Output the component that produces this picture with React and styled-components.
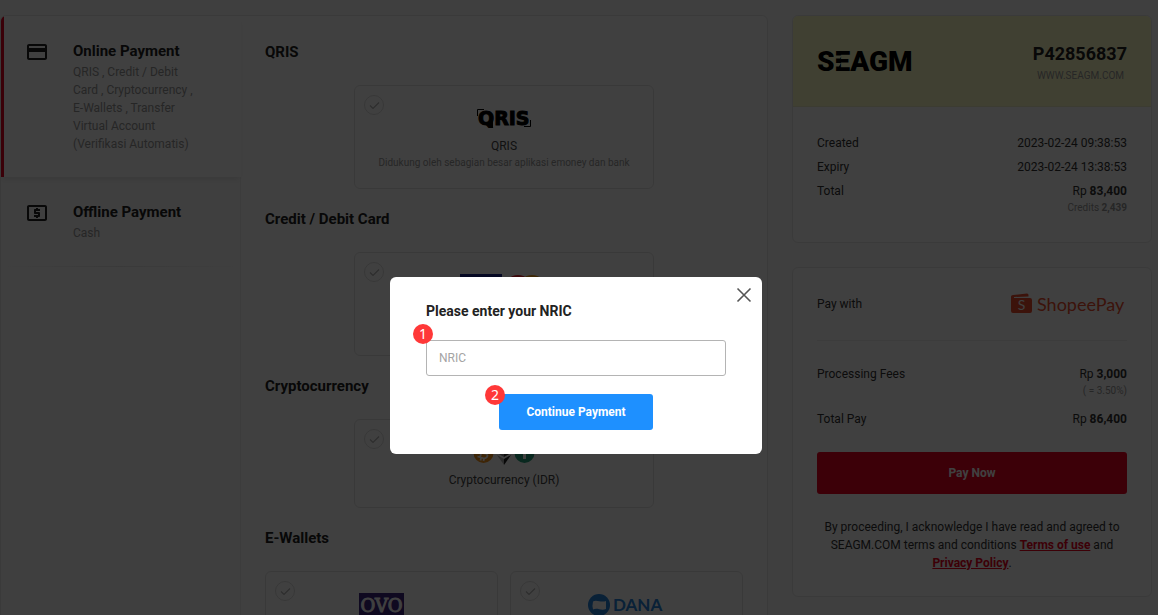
import React from "react";
import styled, { createGlobalStyle, css } from "styled-components";
import { MdPayment, MdLocalAtm } from "react-icons/md";

const GlobalStyle = createGlobalStyle`
  *, *::before, *::after { box-sizing: border-box; }
  body {
    margin: 0;
    height: 100vh;
    overflow: hidden;
    background: #fafafa;
    color: #333;
    font: 400 12px/18px Roboto, "Liberation Sans", sans-serif;
  }
  h1, h2, p, dl, dd, dt { margin: 0; font: inherit; }
  button, input { font: inherit; }
  svg { overflow: visible; }
`;

const Page = styled.div`
  display: grid;
  grid-template-columns: minmax(0, 1fr) 360px;
  gap: 24px;
  align-items: start;
  padding: 15px 6px 0 0;
`;

const panel = css`
  background: #fff;
  border: 1px solid #e8e8e8;
  border-radius: 6px;
`;

/* Payment methods */

const Methods = styled.main`
  ${panel}
  display: grid;
  grid-template-columns: 240px minmax(0, 1fr);
  overflow: hidden;
`;

const Nav = styled.nav`
  display: flex;
  flex-direction: column;
  background: #fafafa;
  border-right: 1px solid #f0f0f0;
`;

const NavItem = styled.button`
  position: relative;
  display: flex;
  align-items: flex-start;
  gap: 24px;
  margin-right: ${(p) => (p.$active ? "-1px" : "0")};
  padding: 24px 44px 24px 24px;
  border: 0;
  background: ${(p) => (p.$active ? "#fff" : "transparent")};
  box-shadow: ${(p) => (p.$active ? "inset 3px 0 0 #e50020, 0 4px 6px -2px rgba(0, 0, 0, 0.1)" : "none")};
  color: #222;
  text-align: left;

  svg { flex: none; }
`;

const NavTitle = styled.span`
  display: block;
  font-size: 15px;
  font-weight: 700;
  line-height: 23px;
  white-space: nowrap;
`;

const NavText = styled.span`
  display: block;
  color: #999;
  font-weight: 400;
`;

const NavDivider = styled.hr`
  width: 100%;
  height: 1px;
  margin: 0;
  border: 0;
  background: linear-gradient(to right, transparent, #e4e4e4 50%, transparent);
`;

const Content = styled.div`
  display: flex;
  flex-direction: column;
  gap: 18px;
  padding: 24px;
`;

const SectionTitle = styled.h2`
  margin-bottom: 21px;
  color: #222;
  font-size: 15px;
  font-weight: 700;
  line-height: 24px;
`;

const Options = styled.div`
  display: grid;
  grid-template-columns: ${(p) => (p.$pair ? "1fr 1fr" : "minmax(0, 300px)")};
  justify-content: center;
  gap: 12px;
`;

const Option = styled.label`
  position: relative;
  display: flex;
  flex-direction: column;
  align-items: center;
  min-height: ${(p) => (p.$tall ? "104px" : "89px")};
  padding: 21px 18px 18px;
  border: 1px solid #e4e4e4;
  border-radius: 6px;
  text-align: center;
`;

const Mark = styled.span`
  position: absolute;
  top: 9px;
  left: 9px;
  display: grid;
  width: 20px;
  height: 20px;

  > * { grid-area: 1 / 1; }
`;

const Radio = styled.input`
  appearance: none;
  width: 20px;
  height: 20px;
  margin: 0;
  border: 1px solid #ddd;
  border-radius: 50%;
`;

const LogoBox = styled.span`
  display: flex;
  align-items: flex-start;
  justify-content: center;
  height: 24px;
  margin-bottom: 6px;
`;

const OptionText = styled.span`
  color: #444;
`;

const Small = styled.span`
  color: #999;
  font-size: 10px;
  line-height: 15px;
`;

/* Order column */

const Side = styled.aside`
  display: flex;
  flex-direction: column;
  gap: 24px;
`;

const Card = styled.section`
  ${panel}
  overflow: hidden;
`;

const OrderHead = styled.header`
  display: flex;
  align-items: center;
  justify-content: space-between;
  height: 91px;
  padding: 0 24px;
  background: #ffffc8;
  border-bottom: 1px solid #f0f0c8;
`;

const OrderNumber = styled.div`
  display: flex;
  flex-direction: column;
  align-items: flex-end;
`;

const OrderId = styled.h1`
  color: #222;
  font-size: 18px;
  font-weight: 700;
  line-height: 28px;
`;

const Site = styled(Small)`
  padding-right: 3px;
`;

const OrderBody = styled.dl`
  display: flex;
  flex-direction: column;
  gap: 6px;
  padding: 27px 24px;
`;

const PayBody = styled.div`
  display: flex;
  flex-direction: column;
  padding: 18px 24px 24px;
`;

const PayWith = styled.div`
  display: flex;
  align-items: center;
  justify-content: space-between;
  height: 55px;
  padding-bottom: 18px;
  border-bottom: 1px solid #eee;
`;

const Totals = styled.dl`
  display: flex;
  flex-direction: column;
  gap: 12px;
  padding: 24px 0;
`;

const RowLine = styled.div`
  display: flex;
  justify-content: space-between;
`;

const Value = styled.dd`
  display: flex;
  flex-direction: column;
  align-items: flex-end;

  b { font-weight: 700; }
`;

const Button = styled.button`
  display: block;
  width: ${(p) => (p.$wide ? "100%" : "154px")};
  height: ${(p) => (p.$wide ? "42px" : "36px")};
  padding: 0;
  border: 0;
  border-radius: 3px;
  background: ${(p) => (p.$wide ? "#ee0020" : "#1e90ff")};
  color: #fff;
  font-weight: 700;
`;

const Terms = styled.p`
  margin-top: 24px;
  text-align: center;

  a { color: #f0001c; font-weight: 700; }
`;

/* Dialog */

const Overlay = styled.div`
  position: fixed;
  inset: 0;
  display: flex;
  align-items: flex-start;
  justify-content: center;
  padding: 277px 6px 0 0;
  background: rgba(0, 0, 0, 0.75);
`;

const Dialog = styled.form`
  position: relative;
  display: flex;
  flex-direction: column;
  align-items: center;
  width: 372px;
  padding: 24px 36px;
  border-radius: 6px;
  background: #fff;
`;

const DialogTitle = styled.label`
  align-self: stretch;
  margin-bottom: 19px;
  color: #222;
  font-size: 14px;
  font-weight: 700;
  line-height: 20px;
`;

const Close = styled.button`
  position: absolute;
  top: 8px;
  right: 8px;
  display: grid;
  place-items: center;
  width: 20px;
  height: 20px;
  padding: 0;
  border: 0;
  background: none;
`;

const Field = styled.div`
  position: relative;
  width: ${(p) => (p.$wide ? "100%" : "auto")};
`;

const Input = styled.input`
  display: block;
  width: 100%;
  height: 36px;
  margin-bottom: 18px;
  padding: 0 12px;
  border: 1px solid #b4b4b4;
  border-radius: 3px;
  background: #fff;

  &::placeholder { color: #a4a4a4; opacity: 1; }
`;

const Step = styled.span`
  position: absolute;
  top: ${(p) => p.$top}px;
  left: ${(p) => p.$left}px;
  width: 20px;
  height: 20px;
  border-radius: 50%;
  background: #ff3838;
  color: #fff;
  font: 400 14px/20px "Noto Sans", sans-serif;
  text-align: center;
`;

/* Logos */

const QrisLogo = () => (
  <svg width="54" height="20" viewBox="0 0 54 20" role="img" aria-label="QRIS">
    <path d="M.5 9V2.500H7M53.500 13v6.500H47" fill="none" stroke="#000" />
    <path d="M12 13h4v8h-4z" />
    <text x="1" y="18" fontFamily="DejaVu Sans" fontWeight="700" fontSize="19" stroke="#000" strokeWidth="1">QRIS</text>
  </svg>
);

const CardLogos = () => (
  <svg width="90" height="28" viewBox="0 0 90 28" role="img" aria-label="Visa, Mastercard">
    <path d="M1 0h42v28H1z" fill="#14208c" />
    <circle cx="59" cy="15" r="14" fill="#eb1c26" />
    <circle cx="73" cy="15" r="14" fill="#f79e1b" />
  </svg>
);

const CryptoLogos = () => (
  <svg width="62" height="24" viewBox="0 0 62 24" role="img" aria-label="Bitcoin, Ethereum, Tether">
    <circle cx="10.500" cy="12" r="10" fill="#f7931a" />
    <path d="M7 7l7 1.500q3 1 1.500 3-1 1.500-3 1 3 1.500 1.500 3.500-1.500 2-4.500 1l-5-1.500M9 8l-2 9M10 5l-1 3M13 6l-.5 2M8 17l-.5 2.500M11 17.500l-.5 2.500M8.500 11.800l4 .8" fill="none" stroke="#fff" strokeWidth="1.800" />
    <path d="M31 0l-7 12 7 4z" fill="#8a8a8a" />
    <path d="M31 0l7 12-7 4z" fill="#333" />
    <path d="M24 14l7 4v6z" fill="#aaa" />
    <path d="M38 14l-7 4v6z" fill="#222" />
    <circle cx="51.500" cy="12" r="10" fill="#26a17b" />
    <path d="M46 6h11v3h-4v9h-3V9h-4z" fill="#fff" />
  </svg>
);

const OvoLogo = () => (
  <svg width="45" height="28" viewBox="0 0 45 28" role="img" aria-label="OVO">
    <path d="M0 0h45v28H0z" fill="#3f2480" />
    <text x="22.500" y="19" textAnchor="middle" fontFamily="DejaVu Serif" fontSize="18" fill="#fff" stroke="#fff">OVO</text>
  </svg>
);

const DanaLogo = () => (
  <svg width="78" height="24" viewBox="0 0 78 24" role="img" aria-label="DANA">
    <circle cx="11" cy="12" r="11" fill="#2482dc" />
    <path d="M5 8.500c3.500-2.500 8 1.500 13-.5v8c-5 2-8.500-1.500-13 .5q-1-4 0-8z" fill="#fff" />
    <text x="25" y="18" fontFamily="Lato" fontWeight="700" fontSize="17" fill="#2482dc">DANA</text>
  </svg>
);

const SeagmLogo = () => (
  <svg width="98" height="24" viewBox="0 0 98 24" role="img" aria-label="SEAGM">
    <text x="0" y="22" fontFamily="Roboto" fontWeight="900" fontSize="28">SEAGM</text>
    <path d="M17 6.500h8l-2 3h-6zM17 14h7l-2 3.500h-5z" fill="#ffffc8" />
  </svg>
);

const ShopeePayLogo = () => (
  <svg width="117" height="24" viewBox="0 0 117 24" role="img" aria-label="ShopeePay">
    <path d="M1 4.500Q1 3 3 3l14-1.500q1.500 0 1.500 1.500v1.500L4 5v1h16q2 0 2 2v11q0 2-2 2H3q-2 0-2-2z" fill="#ee4d2d" />
    <text x="11.500" y="18" textAnchor="middle" fontFamily="Lato" fontSize="14" fill="#fff">S</text>
    <text x="27" y="19" fontFamily="Lato" fontSize="18" fill="#ee4d2d">ShopeePay</text>
  </svg>
);

const CheckGlyph = () => (
  <svg width="20" height="20" viewBox="0 0 20 20" fill="none" stroke="#b4b4b4" strokeWidth="1.200" aria-hidden="true">
    <path d="M6 10.500l3 3 6-6" />
  </svg>
);

const SECTIONS = [
  {
    title: "QRIS",
    options: [{ id: "qris", Logo: QrisLogo, name: "QRIS", note: "Didukung oleh sebagian besar aplikasi emoney dan bank", tall: true }],
  },
  { title: "Credit / Debit Card", options: [{ id: "card", Logo: CardLogos, tall: true }] },
  { title: "Cryptocurrency", options: [{ id: "crypto", Logo: CryptoLogos, name: "Cryptocurrency (IDR)" }] },
  {
    title: "E-Wallets",
    options: [
      { id: "ovo", Logo: OvoLogo },
      { id: "dana", Logo: DanaLogo },
    ],
  },
];

const Row = ({ label, children, note }) => (
  <RowLine>
    <dt>{label}</dt>
    <Value>
      <span>{children}</span>
      {note && <Small>{note}</Small>}
    </Value>
  </RowLine>
);

export default function App() {
  return (
    <>
      <GlobalStyle />
      <Page>
        <Methods>
          <Nav>
            <NavItem type="button" $active>
              <MdPayment size={24} />
              <span>
                <NavTitle>Online Payment</NavTitle>
                <NavText>QRIS , Credit / Debit Card , Cryptocurrency , E-Wallets , Transfer Virtual Account (Verifikasi Automatis)</NavText>
              </span>
            </NavItem>
            <NavItem type="button">
              <MdLocalAtm size={24} />
              <span>
                <NavTitle>Offline Payment</NavTitle>
                <NavText>Cash</NavText>
              </span>
            </NavItem>
            <NavDivider />
          </Nav>
          <Content>
            {SECTIONS.map(({ title, options }) => (
              <section key={title}>
                <SectionTitle>{title}</SectionTitle>
                <Options $pair={options.length > 1}>
                  {options.map(({ id, Logo, name, note, tall }) => (
                    <Option key={id} $tall={tall}>
                      <Mark>
                        <Radio type="radio" name="method" value={id} />
                        <CheckGlyph />
                      </Mark>
                      <LogoBox><Logo /></LogoBox>
                      {name && <OptionText>{name}</OptionText>}
                      {note && <Small>{note}</Small>}
                    </Option>
                  ))}
                </Options>
              </section>
            ))}
          </Content>
        </Methods>

        <Side>
          <Card>
            <OrderHead>
              <SeagmLogo />
              <OrderNumber>
                <OrderId>P42856837</OrderId>
                <Site>WWW.SEAGM.COM</Site>
              </OrderNumber>
            </OrderHead>
            <OrderBody>
              <Row label="Created">2023-02-24 09:38:53</Row>
              <Row label="Expiry">2023-02-24 13:38:53</Row>
              <Row label="Total" note={<>Credits <b>2,439</b></>}>Rp <b>83,400</b></Row>
            </OrderBody>
          </Card>

          <Card>
            <PayBody>
              <PayWith>
                <span>Pay with</span>
                <ShopeePayLogo />
              </PayWith>
              <Totals>
                <Row label="Processing Fees" note="( = 3.50%)">Rp <b>3,000</b></Row>
                <Row label="Total Pay">Rp <b>86,400</b></Row>
              </Totals>
              <Button type="button" $wide>Pay Now</Button>
              <Terms>
                By proceeding, I acknowledge I have read and agreed to SEAGM.COM terms and conditions{" "}
                <a href="#terms">Terms of use</a> and <a href="#privacy">Privacy Policy</a>.
              </Terms>
            </PayBody>
          </Card>
        </Side>
      </Page>

      <Overlay>
        <Dialog role="dialog" aria-modal="true" aria-labelledby="nric-label">
          <Close type="button" aria-label="Close">
            <svg width="14" height="14" viewBox="0 0 14 14" stroke="#555" strokeWidth="1.600" aria-hidden="true">
              <path d="M.5.5l13 13M13.500.5l-13 13" />
            </svg>
          </Close>
          <DialogTitle id="nric-label" htmlFor="nric">Please enter your NRIC</DialogTitle>
          <Field $wide>
            <Input id="nric" type="text" placeholder="NRIC" />
            <Step $top={-16} $left={-13}>1</Step>
          </Field>
          <Field>
            <Button type="submit">Continue Payment</Button>
            <Step $top={-9} $left={-14}>2</Step>
          </Field>
        </Dialog>
      </Overlay>
    </>
  );
}
